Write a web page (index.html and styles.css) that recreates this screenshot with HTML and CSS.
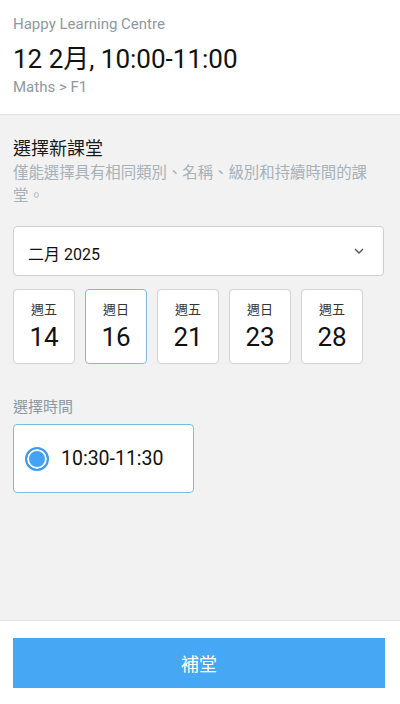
FILE: index.html
```html
<!DOCTYPE html>
<html lang="zh-Hant">
<head>
  <meta charset="UTF-8">
  <meta name="viewport" content="width=device-width,initial-scale=1">
  <title>補堂</title>
  <link rel="stylesheet" href="styles.css">
</head>
<body>
  <div class="page">
    <!-- 原課堂 -->
    <div class="header">
      <div class="centre">Happy Learning Centre</div>
      <div class="lesson">12 2月, 10:00-11:00</div>
      <div class="course">Maths &gt; F1</div>
    </div>

    <div class="main">
      <div class="title">選擇新課堂</div>
      <div class="desc">僅能選擇具有相同類別、名稱、級別和持續時間的課堂。</div>

      <div class="select">
        <span>二月 2025</span>
        <svg width="12" height="8" viewBox="0 0 12 8"><path d="M2 2l4 4 4-4" fill="none" stroke="#555" stroke-width="1.4"/></svg>
      </div>

      <div class="dates">
        <div class="date"><span class="week">週五</span><span class="day">14</span></div>
        <div class="date active"><span class="week">週日</span><span class="day">16</span></div>
        <div class="date"><span class="week">週五</span><span class="day">21</span></div>
        <div class="date"><span class="week">週日</span><span class="day">23</span></div>
        <div class="date"><span class="week">週五</span><span class="day">28</span></div>
      </div>

      <div class="label">選擇時間</div>
      <div class="slot">
        <span class="radio"></span>
        <span class="time">10:30-11:30</span>
      </div>
    </div>

    <div class="footer">
      <button class="btn">補堂</button>
    </div>
  </div>
</body>
</html>
```

FILE: styles.css
```css
body{
  margin:0;
  font-family:Roboto,"Noto Sans CJK TC",sans-serif;
  color:#111;
}
.page{
  height:704px;
  display:flex;
  flex-direction:column;
}
.header{
  background:#fff;
  padding:15px 13px 0;
  height:99px;
  border-bottom:1px solid #e2e2e2;
}
.centre{
  font-size:15px;
  color:#8d98a1;
  line-height:18px;
}
.lesson{
  font-size:26px;
  line-height:32px;
  margin-top:10px;
  color:#111;
}
.course{
  font-size:15px;
  color:#8d98a1;
  line-height:18px;
  margin-top:3px;
}
.main{
  flex:1;
  background:#f2f2f2;
  padding:22px 13px 0 13px;
  border-bottom:1px solid #e2e2e2;
}
.title{
  font-size:18px;
  line-height:24px;
  color:#1a1a1a;
}
.desc{
  font-size:15.4px;
  line-height:23px;
  color:#a7b1b9;
  margin-top:1px;
}
.select{
  margin-top:18px;
  height:48px;
  background:#fff;
  border:1px solid #cfcfcf;
  border-radius:4px;
  display:flex;
  align-items:center;
  justify-content:space-between;
  padding:0 18px 0 14px;
  font-size:16px;
  margin-right:3px;
}
.select span{
  margin-top:4px;
}
.dates{
  display:flex;
  gap:10px;
  margin-top:13px;
}
.date{
  width:60px;
  height:73px;
  background:#fff;
  border:1px solid #d2d2d2;
  border-radius:4px;
  display:flex;
  flex-direction:column;
  align-items:center;
  justify-content:center;
}
.date.active{
  border-color:#7cbbe4;
}
.week{
  font-size:13px;
  line-height:16px;
  color:#333;
  margin-top:2px;
}
.day{
  font-size:26px;
  line-height:32px;
  margin-top:3px;
  color:#111;
}
.label{
  font-size:15px;
  line-height:18px;
  color:#8d98a1;
  margin-top:34px;
}
.slot{
  margin-top:8px;
  height:67px;
  width:168px;
  background:#fff;
  border:1px solid #7cbbe4;
  border-radius:4px;
  display:flex;
  align-items:center;
  padding-left:11px;
}
.radio{
  width:20px;
  height:20px;
  border:2px solid #3a9bef;
  border-radius:50%;
  background:#45a2f4;
  box-shadow:inset 0 0 0 2px #fff;
}
.time{
  font-size:19.5px;
  margin-left:12px;
  color:#111;
}
.footer{
  height:83px;
  background:#fff;
  padding:0 15px 0 13px;
}
.btn{
  margin-top:17px;
  width:100%;
  height:50px;
  border:0;
  border-radius:0;
  background:#46a7f5;
  color:#fff;
  font-size:18px;
  font-family:Roboto,"Noto Sans CJK TC",sans-serif;
}
```
